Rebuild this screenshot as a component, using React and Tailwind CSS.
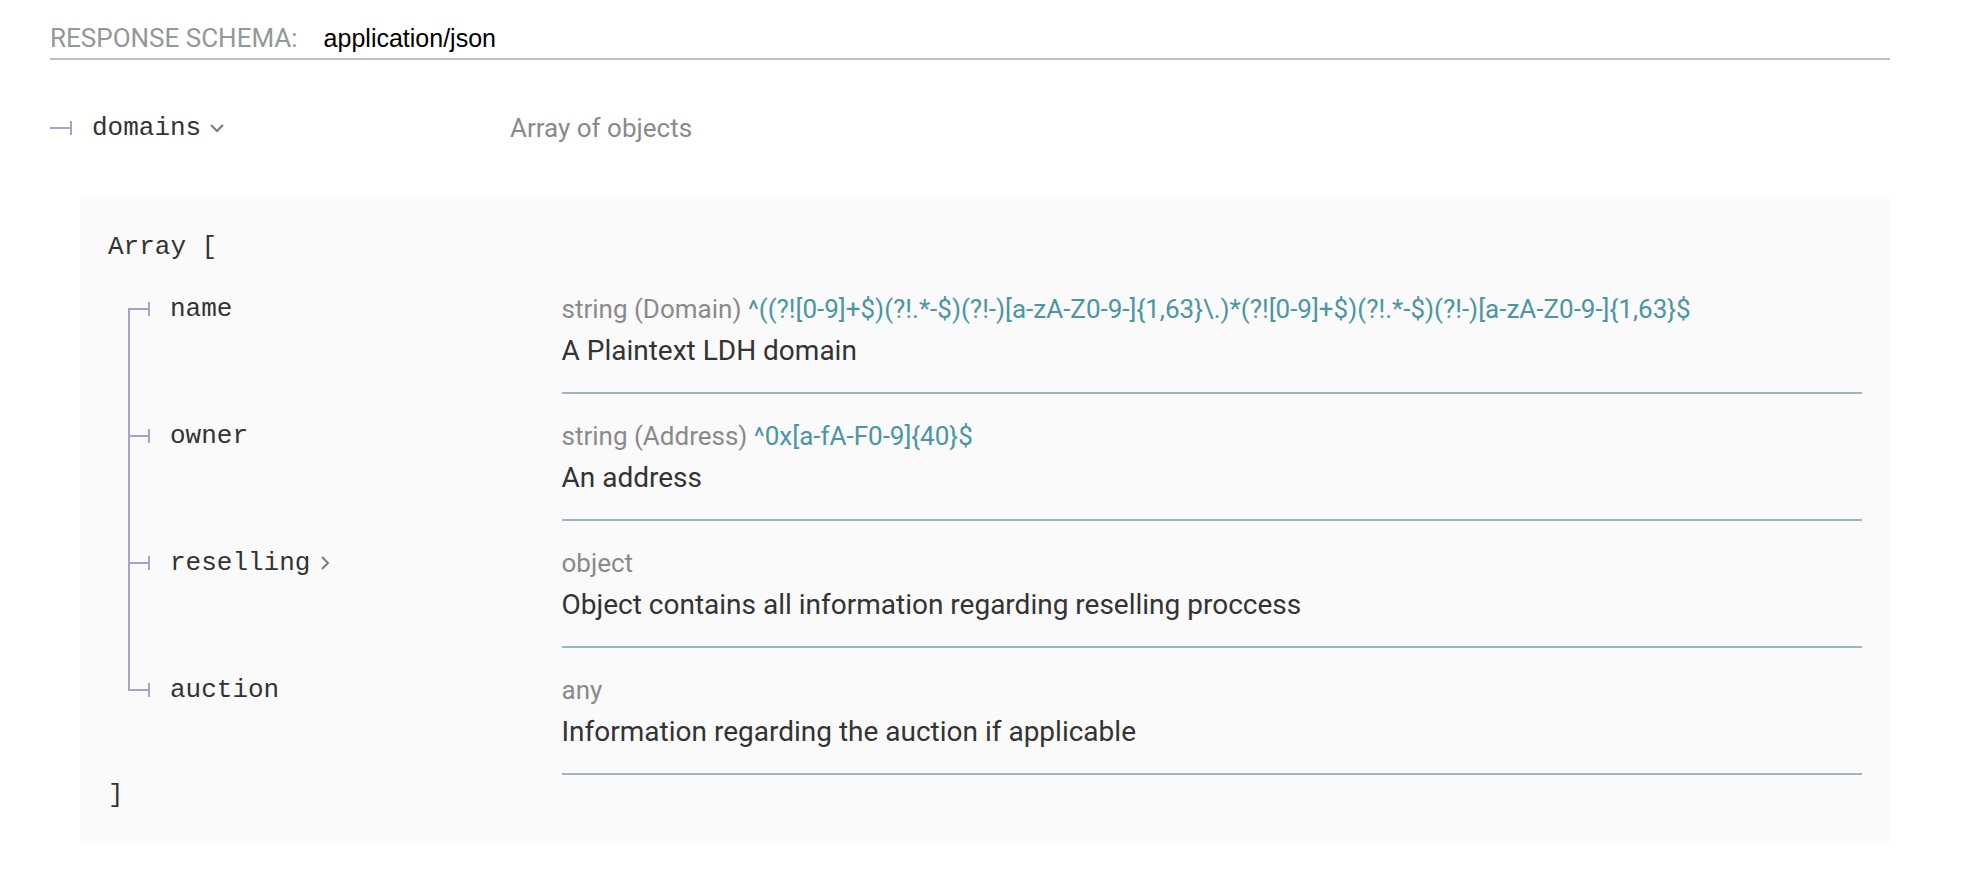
import React from "react";

const LINE = "bg-[#a3a3cc]";

function Tick() {
  return (
    <span className="inline-flex items-center shrink-0 mr-[20px]">
      <span className={`w-[20px] h-[2px] ${LINE}`} />
      <span className={`w-[2px] h-[14px] ${LINE}`} />
    </span>
  );
}

function ChevronDown() {
  return (
    <svg viewBox="0 0 24 24" className="w-[24px] h-[24px] ml-[4px] fill-[#7a7a7a] shrink-0">
      <polygon points="17.3 8.3 12 13.6 6.7 8.3 5.3 9.7 12 16.4 18.7 9.7" />
    </svg>
  );
}

function ChevronRight() {
  return (
    <svg viewBox="0 0 24 24" className="w-[24px] h-[24px] ml-[3px] fill-[#7a7a7a] shrink-0 -rotate-90">
      <polygon points="17.3 8.3 12 13.6 6.7 8.3 5.3 9.7 12 16.4 18.7 9.7" />
    </svg>
  );
}

const rows = [
  {
    name: "name",
    type: "string",
    title: " (Domain)",
    pattern:
      "^((?![0-9]+$)(?!.*-$)(?!-)[a-zA-Z0-9-]{1,63}\\.)*(?![0-9]+$)(?!.*-$)(?!-)[a-zA-Z0-9-]{1,63}$",
    desc: "A Plaintext LDH domain",
  },
  {
    name: "owner",
    type: "string",
    title: " (Address)",
    pattern: "^0x[a-fA-F0-9]{40}$",
    desc: "An address",
  },
  {
    name: "reselling",
    type: "object",
    chevron: true,
    desc: "Object contains all information regarding reselling proccess",
  },
  {
    name: "auction",
    type: "any",
    desc: "Information regarding the auction if applicable",
  },
];

function Row({ row, index, count }) {
  const first = index === 0;
  const last = index === count - 1;
  return (
    <div className="flex">
      <div className="relative w-1/4 shrink-0 pt-[22px] pr-[20px]">
        {first && <span className={`absolute left-0 top-[41px] bottom-0 w-[2px] ${LINE}`} />}
        {!first && !last && <span className={`absolute left-0 top-0 bottom-0 w-[2px] ${LINE}`} />}
        {last && <span className={`absolute left-0 top-0 h-[43px] w-[2px] ${LINE}`} />}
        <div className="flex items-center h-[40px] font-['Liberation_Mono',monospace] text-[26px] text-[#333]">
          <Tick />
          <span className="whitespace-nowrap">{row.name}</span>
          {row.chevron && <ChevronRight />}
        </div>
      </div>
      <div className="flex-1 pt-[22px] pb-[19px] border-b-2 border-[#9fb4be]">
        <div className="h-[40px] leading-[40px] text-[26px] whitespace-nowrap">
          <span className="text-[#8a8a8a]">{row.type}</span>
          {row.title && <span className="text-[#8a8a8a]">{row.title}</span>}
          {row.pattern && (
            <span className="text-[#4a96a5]">
              {" "}
              {row.pattern}
            </span>
          )}
        </div>
        <div className="h-[44px] leading-[44px] text-[28px] text-[#333]">{row.desc}</div>
      </div>
    </div>
  );
}

export default function App() {
  return (
    <div className="w-[1970px] min-h-[884px] bg-white font-['Roboto',sans-serif] pl-[50px] pr-[80px] pt-[18px]">
      <h5 className="flex items-center h-[42px] border-b-2 border-[#bec1c3] font-normal">
        <span className="text-[26px] text-[#939899] uppercase leading-[40px]">Response Schema:</span>
        <span className="ml-[26px] text-[25px] text-black font-['Liberation_Sans',sans-serif] leading-[40px]">
          application/json
        </span>
      </h5>

      <div className="flex mt-[27px]">
        <div className="w-1/4 shrink-0 pt-[21px] pb-[19px] pr-[20px]">
          <div className="flex items-center h-[40px] font-['Liberation_Mono',monospace] text-[26px] text-[#333]">
            <Tick />
            <span>domains</span>
            <ChevronDown />
          </div>
        </div>
        <div className="flex-1 pt-[21px] pb-[19px]">
          <div className="h-[40px] leading-[40px] text-[26px] text-[#8a8a8a]">Array of objects</div>
        </div>
      </div>

      <div className="mt-[30px] ml-[30px] bg-[#fafafa] px-[28px] pt-[30px] pb-[28px]">
        <div className="h-[40px] leading-[40px] font-['Liberation_Mono',monospace] text-[26px] text-[#333]">
          Array [
        </div>
        <div className="ml-[20px]">
          {rows.map((r, i) => (
            <Row key={r.name} row={r} index={i} count={rows.length} />
          ))}
        </div>
        <div className="h-[40px] leading-[40px] font-['Liberation_Mono',monospace] text-[26px] text-[#333]">]</div>
      </div>
    </div>
  );
}
